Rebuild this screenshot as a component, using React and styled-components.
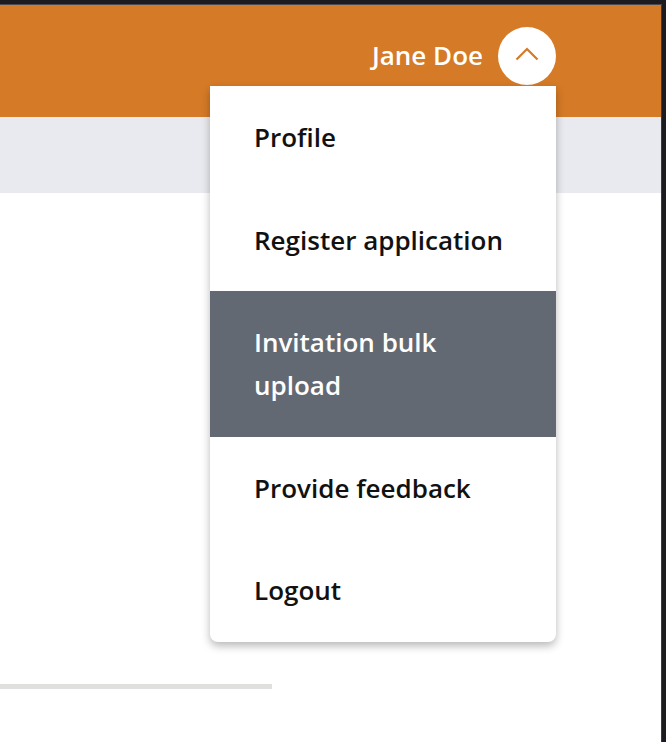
import React, { useState } from 'react'
import styled, { createGlobalStyle } from 'styled-components'

const GlobalStyle = createGlobalStyle`
  html, body {
    margin: 0;
    padding: 0;
    background: #1b1b20;
  }
  body {
    font-family: "Open Sans", "Noto Sans", sans-serif;
  }
`

const menuItems = [
  'Profile',
  'Register application',
  'Invitation bulk upload',
  'Provide feedback',
  'Logout',
]

const App = () => {
  const [active, setActive] = useState(2)

  return (
    <>
      <GlobalStyle />
      <Frame>
        <TopEdge />
        <Window>
          <Header>
            <UserArea>
              <UserName>Jane Doe</UserName>
              <ToggleButton aria-label="Close menu">
                <svg width="24" height="14" viewBox="0 0 24 14" fill="none">
                  <path d="M1.5 12.5 L12 2 L22.5 12.5" stroke="#d57a27" strokeWidth="2.2" />
                </svg>
              </ToggleButton>
              <Menu>
                {menuItems.map((label, i) => (
                  <MenuItem
                    key={label}
                    $active={i === active}
                    onMouseEnter={() => setActive(i)}
                  >
                    {label}
                  </MenuItem>
                ))}
              </Menu>
            </UserArea>
          </Header>
          <SubBar />
          <Content>
            <Divider />
          </Content>
        </Window>
      </Frame>
    </>
  )
}

const Frame = styled.div`
  width: 666px;
  height: 742px;
  display: flex;
  flex-direction: column;
  overflow: hidden;
`

const TopEdge = styled.div`
  height: 4px;
  background: #1b1b20;
  border-bottom: 1px solid #4a4a52;
  margin-right: 4px;
`

const Window = styled.div`
  flex: 1;
  width: 662px;
  display: flex;
  flex-direction: column;
  background: #ffffff;
  border-right: 1px solid #3a3a42;
  box-sizing: border-box;
`

const Header = styled.header`
  height: 112px;
  background: #d57a27;
  display: flex;
  justify-content: flex-end;
  align-items: flex-start;
  padding: 22px 105px 0 0;
  box-sizing: border-box;
  position: relative;
  z-index: 2;
`

const UserArea = styled.div`
  position: relative;
  display: flex;
  align-items: center;
  gap: 15px;
`

const UserName = styled.span`
  color: #ffffff;
  font-size: 26px;
  font-weight: 600;
  margin-bottom: 2px;
`

const ToggleButton = styled.button`
  width: 58px;
  height: 58px;
  border-radius: 50%;
  border: none;
  background: #ffffff;
  display: flex;
  align-items: center;
  justify-content: center;
  padding: 0 0 4px;
  cursor: pointer;
`

const Menu = styled.ul`
  position: absolute;
  top: calc(100% + 1px);
  right: 0;
  width: 346px;
  margin: 0;
  padding: 0;
  list-style: none;
  background: #ffffff;
  border-radius: 0 0 8px 8px;
  box-shadow: 0 4px 8px rgba(0, 0, 0, 0.28);
  overflow: hidden;
`

const MenuItem = styled.li`
  padding: 30px 45px 29.5px 44px;
  font-size: 26px;
  line-height: 43px;
  font-weight: 600;
  color: ${p => (p.$active ? '#ffffff' : '#111111')};
  background: ${p => (p.$active ? '#636973' : 'transparent')};
  cursor: pointer;
`

const SubBar = styled.div`
  height: 76px;
  background: #e9eaef;
`

const Content = styled.main`
  flex: 1;
  display: flex;
  flex-direction: column;
  padding-top: 491px;
`

const Divider = styled.div`
  width: 272px;
  height: 5px;
  background: #e0e0df;
`

export default App
